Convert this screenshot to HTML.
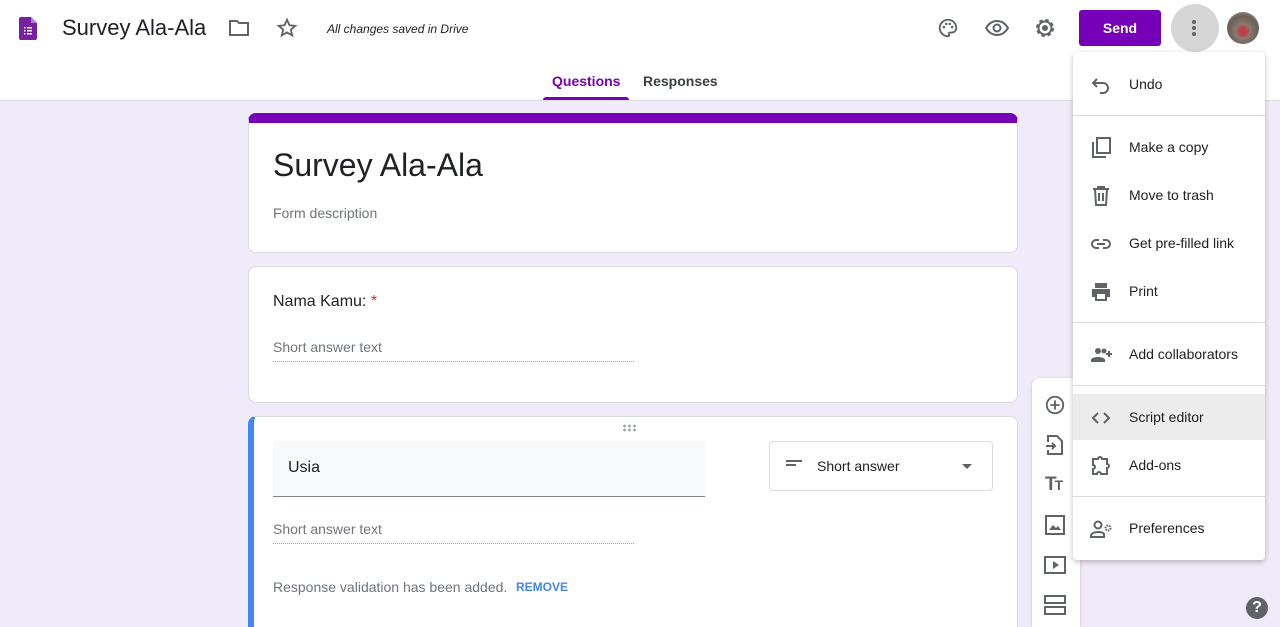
<!DOCTYPE html>
<html><head><meta charset="utf-8"><style>
*{box-sizing:border-box;margin:0;padding:0}
html,body{width:1280px;height:627px;overflow:hidden}
body{background:#f0ebf8;font-family:"Liberation Sans",Arial,sans-serif;position:relative;color:#202124}
.abs{position:absolute}
.hdr{position:absolute;left:0;top:0;width:1280px;height:101px;background:#fff;border-bottom:1px solid #dadce0}
.card{position:absolute;left:248px;width:770px;background:#fff;border:1px solid #dadce0;border-radius:8px;overflow:hidden}
svg{display:block}
.ic{fill:none;stroke:#5f6368;stroke-width:2}
.menu{position:absolute;left:1073px;top:52px;width:192px;height:508px;background:#fff;border-radius:4px;box-shadow:0 2px 6px rgba(0,0,0,.25)}
.mi{position:absolute;left:0;width:192px;height:46px;font-size:14px;color:#202124;line-height:46px;padding-left:56px}
.mi svg{position:absolute;left:16px;top:12px}
.sep{position:absolute;left:0;width:192px;height:1px;background:#dadce0}
</style></head><body>
<div class="hdr">
 <svg class="abs" style="left:19px;top:17px" width="18" height="23" viewBox="0 0 18 23"><path d="M2 0h10l6 6v15a2 2 0 0 1-2 2H2a2 2 0 0 1-2-2V2a2 2 0 0 1 2-2z" fill="#7b1fa2"/><path d="M12 0l6 6h-6z" fill="#b27ed1"/><g fill="#fff"><rect x="5" y="10" width="1.5" height="1.5"/><rect x="8" y="10" width="5" height="1.5"/><rect x="5" y="13" width="1.5" height="1.5"/><rect x="8" y="13" width="5" height="1.5"/><rect x="5" y="16" width="1.5" height="1.5"/><rect x="8" y="16" width="5" height="1.5"/></g></svg>
 <div class="abs" style="left:62px;top:15px;font-size:22px;color:#202124">Survey Ala-Ala</div>
 <svg class="abs" style="left:228px;top:18px" width="22" height="20" viewBox="0 0 22 20"><path class="ic" d="M2 3h7l2 2h9v12H2z"/></svg>
 <svg class="abs" style="left:276px;top:17px" width="22" height="22" viewBox="0 0 24 24"><path class="ic" stroke-width="1.6" d="M12 3l2.7 6 6.3.6-4.8 4.2 1.5 6.3L12 16.8 6.3 20.1l1.5-6.3L3 9.6l6.3-.6z"/></svg>
 <div class="abs" style="left:327px;top:22px;font-size:12px;font-style:italic;color:#202124">All changes saved in Drive</div>
 <svg class="abs" style="left:937px;top:17px" width="22" height="22" viewBox="0 0 24 24"><path class="ic" d="M12 3a9 9 0 0 0 0 18c1.5 0 1.5-1.3 1-2-.6-.9 0-2 1-2h2a5 5 0 0 0 5-5c0-5-4-9-9-9z"/><g fill="#5f6368"><circle cx="7.5" cy="11" r="1.4"/><circle cx="10" cy="7.5" r="1.4"/><circle cx="14" cy="7.5" r="1.4"/><circle cx="16.5" cy="11" r="1.4"/></g></svg>
 <svg class="abs" style="left:985px;top:18px" width="24" height="20" viewBox="0 0 24 20"><path class="ic" d="M1 10c3-5 7-7 11-7s8 2 11 7c-3 5-7 7-11 7S4 15 1 10z"/><circle class="ic" cx="12" cy="10" r="3.5"/></svg>
 <svg class="abs" style="left:1033px;top:16px" width="24" height="24" viewBox="0 0 24 24"><circle cx="12" cy="12" r="8" class="ic" stroke-width="3" stroke-dasharray="3.5 2.8"/><circle cx="12" cy="12" r="6.5" class="ic"/><circle cx="12" cy="12" r="3" fill="#5f6368"/></svg>
 <div class="abs" style="left:1079px;top:10px;width:82px;height:36px;background:#7500b8;border-radius:3px;color:#fff;font-size:14px;font-weight:bold;text-align:center;line-height:36px">Send</div>
 <div class="abs" style="left:1171px;top:4px;width:48px;height:48px;border-radius:50%;background:#d6d6d6"></div>
 <div class="abs" style="left:1192px;top:20px;width:4px;height:4px;border-radius:50%;background:#5f6368;box-shadow:0 6px 0 #5f6368,0 12px 0 #5f6368"></div>
 <div class="abs" style="left:1227px;top:12px;width:32px;height:32px;border-radius:50%;background:radial-gradient(circle at 50% 60%,#c0404a 0 15%,#8a7a70 30%,#6a5e58 60%,#b8b0a8 100%)"></div>
 <div class="abs" style="left:552px;top:73px;font-size:14px;font-weight:bold;color:#7500b8">Questions</div>
 <div class="abs" style="left:543px;top:97px;width:86px;height:3px;background:#7500b8;border-radius:3px 3px 0 0"></div>
 <div class="abs" style="left:643px;top:73px;font-size:14px;font-weight:bold;color:#3c4043">Responses</div>
</div>

<div class="card" style="top:113px;height:140px;border-top:10px solid #7500b8">
 <div class="abs" style="left:24px;top:24px;font-size:32px;color:#202124">Survey Ala-Ala</div>
 <div class="abs" style="left:24px;top:82px;font-size:14px;color:#70757a">Form description</div>
</div>

<div class="card" style="top:266px;height:137px">
 <div class="abs" style="left:24px;top:26px;font-size:16px">Nama Kamu: <span style="color:#d93025">*</span></div>
 <div class="abs" style="left:24px;top:72px;font-size:14px;color:#70757a">Short answer text</div>
 <div class="abs" style="left:24px;top:94px;width:361px;border-top:1px dotted #9aa0a6"></div>
</div>

<div class="card" style="top:416px;height:211px;border-left:6px solid #4285f4;border-bottom:none;border-radius:8px 8px 0 0">
 <div class="abs" style="left:368px;top:7px;width:14px;height:8px;background:radial-gradient(circle,#9aa0a6 1.2px,transparent 1.5px) 0 0/5px 4px"></div>
 <div class="abs" style="left:19px;top:24px;width:432px;height:56px;background:#f8f9fa;border-bottom:1px solid #80868b"></div>
 <div class="abs" style="left:34px;top:42px;font-size:16px">Usia</div>
 <div class="abs" style="left:515px;top:24px;width:224px;height:50px;border:1px solid #dadce0;border-radius:4px"></div>
 <div class="abs" style="left:532px;top:43px;width:16px;height:2px;background:#5f6368"></div>
 <div class="abs" style="left:532px;top:47px;width:10px;height:2px;background:#5f6368"></div>
 <div class="abs" style="left:563px;top:41px;font-size:14px;color:#202124">Short answer</div>
 <div class="abs" style="left:708px;top:47px;border-left:5px solid transparent;border-right:5px solid transparent;border-top:5px solid #5f6368"></div>
 <div class="abs" style="left:19px;top:104px;font-size:14px;color:#70757a">Short answer text</div>
 <div class="abs" style="left:19px;top:126px;width:361px;border-top:1px dotted #9aa0a6"></div>
 <div class="abs" style="left:19px;top:162px;font-size:14px;color:#70757a">Response validation has been added.</div>
 <div class="abs" style="left:262px;top:163px;font-size:12px;font-weight:bold;color:#4285f4">REMOVE</div>
</div>

<div class="abs" style="left:1032px;top:378px;width:48px;height:249px;background:#fff;border-radius:8px 8px 0 0;box-shadow:0 1px 3px rgba(0,0,0,.2)">
 <svg class="abs" style="left:12px;top:16px" width="22" height="22" viewBox="0 0 24 24"><circle class="ic" cx="12" cy="12" r="9"/><path class="ic" d="M12 7v10M7 12h10"/></svg>
 <svg class="abs" style="left:13px;top:56px" width="20" height="22" viewBox="0 0 20 22"><path class="ic" d="M3 8V2h9l5 5v13H3v-4"/><path class="ic" d="M1 12h9M7 9l3 3-3 3"/></svg>
 <div class="abs" style="left:13px;top:96px;font-size:19px;font-weight:bold;color:#5f6368;letter-spacing:-2px">T<span style="font-size:14px">T</span></div>
 <svg class="abs" style="left:13px;top:137px" width="20" height="20" viewBox="0 0 20 20"><rect class="ic" x="1" y="1" width="18" height="18"/><path d="M4 15l4-5 3 3 2-2 3 4z" fill="#5f6368"/></svg>
 <svg class="abs" style="left:12px;top:178px" width="22" height="18" viewBox="0 0 22 18"><rect class="ic" x="1" y="1" width="20" height="16"/><path d="M9 5v8l6-4z" fill="#5f6368"/></svg>
 <svg class="abs" style="left:12px;top:217px" width="22" height="20" viewBox="0 0 22 20"><rect class="ic" x="1" y="1" width="20" height="7"/><rect class="ic" x="1" y="12" width="20" height="7"/></svg>
</div>

<div class="menu">
 <div class="mi" style="top:9px"><svg width="24" height="24" viewBox="0 0 24 24"><path class="ic" d="M8 6l-4 4 4 4M4 10h10a5 5 0 0 1 0 10h-3"/></svg>Undo</div>
 <div class="sep" style="top:63px"></div>
 <div class="mi" style="top:72px"><svg width="24" height="24" viewBox="0 0 24 24"><path class="ic" d="M4 6v15h13"/><rect class="ic" x="8" y="2" width="13" height="15"/></svg>Make a copy</div>
 <div class="mi" style="top:120px"><svg width="24" height="24" viewBox="0 0 24 24"><path class="ic" d="M4 5h16M9 5V3h6v2M6 5l1 16h10l1-16M10 9v8M14 9v8"/></svg>Move to trash</div>
 <div class="mi" style="top:168px"><svg width="24" height="24" viewBox="0 0 24 24"><path class="ic" d="M10 8H7a4 4 0 0 0 0 8h3M14 8h3a4 4 0 0 1 0 8h-3M8 12h8"/></svg>Get pre-filled link</div>
 <div class="mi" style="top:216px"><svg width="24" height="24" viewBox="0 0 24 24"><path d="M6 3h12v5H6z M3 9h18v8h-3v4H6v-4H3z" fill="#5f6368"/><rect x="8" y="14" width="8" height="5" fill="#fff"/></svg>Print</div>
 <div class="sep" style="top:270px"></div>
 <div class="mi" style="top:279px"><svg width="24" height="24" viewBox="0 0 24 24"><circle cx="9" cy="8" r="3" fill="#5f6368"/><circle cx="15" cy="8" r="2.5" fill="#5f6368"/><path d="M2 19v-2c0-2 4-3 7-3s7 1 7 3v2z" fill="#5f6368"/><path class="ic" d="M20 8v6M17 11h6"/></svg>Add collaborators</div>
 <div class="sep" style="top:333px"></div>
 <div class="mi" style="top:342px;background:#ececec"><svg width="24" height="24" viewBox="0 0 24 24"><path class="ic" d="M9 7l-5 5 5 5M15 7l5 5-5 5"/></svg>Script editor</div>
 <div class="mi" style="top:390px"><svg width="24" height="24" viewBox="0 0 24 24"><path class="ic" d="M4 5h5a2 2 0 0 1 4 0h5v5a2 2 0 0 1 0 4v6h-6a2 2 0 0 0-4 0H4v-5a2 2 0 0 0 0-4z"/></svg>Add-ons</div>
 <div class="sep" style="top:444px"></div>
 <div class="mi" style="top:453px"><svg width="24" height="24" viewBox="0 0 24 24"><circle class="ic" cx="9" cy="8" r="3.5"/><path class="ic" d="M2 20v-1c0-3 4-4 7-4s5 .6 6 2v3z"/><circle cx="19" cy="11" r="2.5" fill="none" stroke="#5f6368" stroke-width="2" stroke-dasharray="1.5 1"/></svg>Preferences</div>
</div>

<div class="abs" style="left:1246px;top:597px;width:22px;height:22px;border-radius:50%;background:#5f6368;color:#fff;font-weight:bold;font-size:16px;text-align:center;line-height:22px">?</div>
</body></html>
